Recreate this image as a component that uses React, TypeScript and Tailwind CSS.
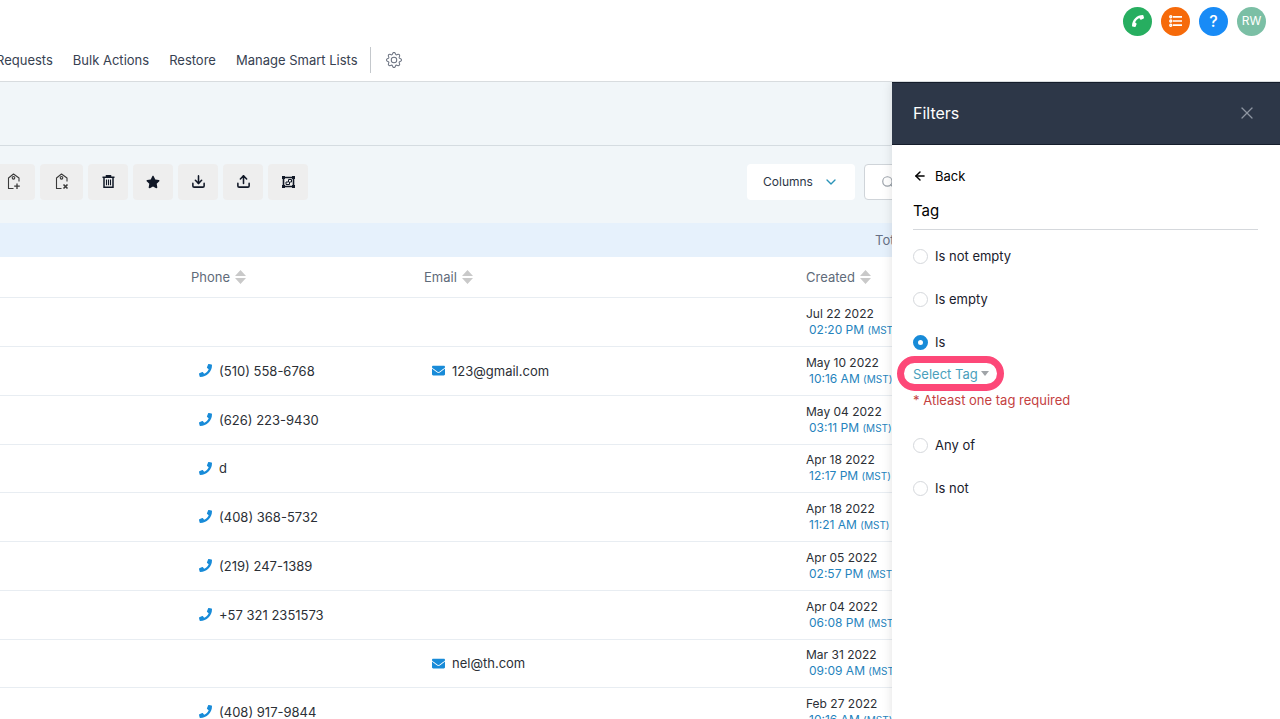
import type { ReactNode } from 'react';
import { ArrowLeft, ChevronDown, Download, Search, Upload, X } from 'lucide-react';
import { BsGear } from 'react-icons/bs';
import { FaEnvelope, FaPhone, FaPhoneAlt, FaStar } from 'react-icons/fa';

interface Contact {
  phone?: string;
  email?: string;
  date: string;
  time: string;
}

const contacts: Contact[] = [
  { date: 'Jul 22 2022', time: '02:20 PM' },
  { phone: '(510) 558-6768', email: '123@gmail.com', date: 'May 10 2022', time: '10:16 AM' },
  { phone: '(626) 223-9430', date: 'May 04 2022', time: '03:11 PM' },
  { phone: 'd', date: 'Apr 18 2022', time: '12:17 PM' },
  { phone: '(408) 368-5732', date: 'Apr 18 2022', time: '11:21 AM' },
  { phone: '(219) 247-1389', date: 'Apr 05 2022', time: '02:57 PM' },
  { phone: '+57 321 2351573', date: 'Apr 04 2022', time: '06:08 PM' },
  { email: 'nel@th.com', date: 'Mar 31 2022', time: '09:09 AM' },
  { phone: '(408) 917-9844', date: 'Feb 27 2022', time: '10:16 AM' },
];

const navItems = ['Requests', 'Bulk Actions', 'Restore', 'Manage Smart Lists'];

function TagIcon({ remove = false }: { remove?: boolean }) {
  return (
    <svg width="14" height="17" viewBox="0 0 14 17" fill="none" stroke="#3a3a3a" strokeWidth="1.1">
      <path d="M6.5 15.5H1.5V5L6.5 1l5.500 4v3.500" strokeLinejoin="round" />
      <circle cx="6.500" cy="4.800" r="1.300" />
      {remove ? (
        <path d="M8.500 11.500l4 4M12.500 11.500l-4 4" strokeWidth="1.600" />
      ) : (
        <path d="M10 10.500v5.500M7.200 13.200h5.600" strokeWidth="1.300" />
      )}
    </svg>
  );
}

function TrashIcon() {
  return (
    <svg width="13" height="13" viewBox="0 0 13 13" fill="none" stroke="#111827">
      <path d="M0.500 2.200h12M4.500 2V0.800h4V2" strokeWidth="1.500" />
      <path d="M2 2.500v9.700h9V2.500" strokeWidth="1.500" />
      <path d="M4.500 4.500v5.700M6.500 4.500v5.700M8.500 4.500v5.700" strokeWidth="1.100" />
    </svg>
  );
}

function MergeIcon() {
  return (
    <svg width="13" height="12" viewBox="0 0 13 12" fill="none" stroke="#111827">
      <path d="M1.500 1.500h10v9h-10z" strokeWidth="1.600" />
      <path d="M0 0h3v3H0zM10 0h3v3h-3zM0 9h3v3H0zM10 9h3v3h-3z" fill="#111827" stroke="none" />
      <path d="M4 8.500V6h2.500V3.500H9.500V6H7.500V8.500z" strokeWidth="1" />
    </svg>
  );
}

function ListIcon() {
  return (
    <svg width="14" height="12" viewBox="0 0 14 12" fill="none" stroke="white" strokeWidth="1.4">
      <circle cx="1.800" cy="1.800" r="1" />
      <circle cx="1.800" cy="6" r="1" />
      <circle cx="1.800" cy="10.200" r="1" />
      <path d="M4 1.800h9M4 6h9M4 10.200h9" strokeWidth="1.700" />
    </svg>
  );
}

function SortIcon() {
  return (
    <svg width="11" height="14" viewBox="0 0 11 14" fill="#c9c9c9">
      <path d="M5.500 0L11 6H0zM5.500 14L11 8H0z" />
    </svg>
  );
}

function ToolButton({ label, wide = false, children }: { label: string; wide?: boolean; children: ReactNode }) {
  return (
    <button
      aria-label={label}
      className={`${wide ? 'w-[43px]' : 'w-10'} h-9 shrink-0 flex items-center justify-center rounded bg-[#eeeeee] text-[#111827]`}
    >
      {children}
    </button>
  );
}

function SortHeader({ label }: { label: string }) {
  return (
    <th className="p-0 pt-px text-left font-normal">
      <button className="flex items-center gap-[5px] text-[#5f6b7a]">
        {label}
        <SortIcon />
      </button>
    </th>
  );
}

function RadioOption({ label, checked = false }: { label: string; checked?: boolean }) {
  return (
    <label className="flex items-center gap-[7px] h-5">
      <input
        type="radio"
        name="tag-filter"
        defaultChecked={checked}
        className="appearance-none size-[15px] rounded-full border border-[#d5d8dc] bg-white checked:border-[5px] checked:border-[#188bd8]"
      />
      {label}
    </label>
  );
}

function Header() {
  return (
    <header className="shrink-0 h-[82px] bg-white border-b border-[#d8dcdf]">
      <div className="h-[42px] flex items-center justify-end gap-[9px] pr-[14px]">
        <button aria-label="Call" className="size-[29px] rounded-full bg-[#27ae60] text-white flex items-center justify-center">
          <FaPhoneAlt className="size-3 rotate-90" />
        </button>
        <button aria-label="Tasks" className="size-[29px] rounded-full bg-[#f66a0a] flex items-center justify-center">
          <ListIcon />
        </button>
        <button className="size-[29px] rounded-full bg-[#188bf6] text-white text-base font-medium">?</button>
        <button className="size-[29px] rounded-full bg-[#7bbfa5] text-white text-xs">RW</button>
      </div>
      <nav className="h-9 flex items-center gap-5 -ml-1 text-[#374151]">
        {navItems.map((item) => (
          <a key={item} href="#" className="whitespace-nowrap">
            {item}
          </a>
        ))}
        <div className="flex items-center -ml-2 gap-[15px]">
          <div className="w-px h-[26px] bg-[#c4c8cc]" />
          <button aria-label="Settings">
            <BsGear className="size-4 text-[#6b7280]" />
          </button>
        </div>
      </nav>
    </header>
  );
}

function Toolbar() {
  return (
    <div className="shrink-0 h-[77px] flex items-center justify-between pr-4 pb-[6px]">
      <div className="flex gap-[5px] -ml-2">
        <ToolButton label="Add tag" wide><TagIcon /></ToolButton>
        <ToolButton label="Remove tag" wide><TagIcon remove /></ToolButton>
        <ToolButton label="Delete"><TrashIcon /></ToolButton>
        <ToolButton label="Favorite"><FaStar className="size-[14px]" /></ToolButton>
        <ToolButton label="Import"><Download className="size-[15px]" strokeWidth={2.5} /></ToolButton>
        <ToolButton label="Export"><Upload className="size-[15px]" strokeWidth={2.5} /></ToolButton>
        <ToolButton label="Merge"><MergeIcon /></ToolButton>
      </div>
      <div className="flex gap-[9px]">
        <button className="h-9 w-[108px] flex items-center justify-center gap-[10px] rounded bg-white text-xs text-[#2d3748]">
          Columns
          <ChevronDown className="size-4 text-[#2a93b8]" />
        </button>
        <label className="h-9 w-[400px] flex items-center gap-2 pl-4 rounded border border-[#cfd4d9] bg-white">
          <Search className="size-[14px] text-[#9aa1a9]" />
          <input type="text" aria-label="Search" className="flex-1 outline-none" />
        </label>
      </div>
    </div>
  );
}

function ContactTable() {
  return (
    <table className="w-full table-fixed border-collapse bg-white">
      <colgroup>
        <col className="w-[191px]" />
        <col className="w-[233px]" />
        <col />
        <col className="w-[474px]" />
      </colgroup>
      <thead>
        <tr className="h-10 border-b border-[#e8edf2]">
          <td />
          <SortHeader label="Phone" />
          <SortHeader label="Email" />
          <SortHeader label="Created" />
        </tr>
      </thead>
      <tbody>
        {contacts.map((contact, i) => (
          <tr key={i} className="h-[49px] nth-[4n]:h-12 border-b border-[#e8edf2] text-[#2b2f36]">
            <td />
            <td className="p-0 pl-2">
              {contact.phone && (
                <div className="flex items-center gap-[7px]">
                  <FaPhone className="size-[13px] text-[#188bd8]" />
                  {contact.phone}
                </div>
              )}
            </td>
            <td className="p-0 pl-2">
              {contact.email && (
                <div className="flex items-center gap-[7px]">
                  <FaEnvelope className="size-[13px] text-[#188bd8]" />
                  {contact.email}
                </div>
              )}
            </td>
            <td className="p-0 text-xs leading-4">
              <div>{contact.date}</div>
              <div className="pl-[3px] text-[#2583bd]">
                {contact.time} <span className="text-[10px]">(MST)</span>
              </div>
            </td>
          </tr>
        ))}
      </tbody>
    </table>
  );
}

function FiltersDrawer() {
  return (
    <aside className="absolute right-0 inset-y-0 w-[388px] bg-white text-[#1a202c] shadow-[0_0_10px_rgba(0,0,0,0.12)]">
      <div className="h-[63px] flex items-center justify-between pl-[21px] pr-[23px] pb-px bg-[#2d3748] border-y border-[#151d2b]">
        <h2 className="text-base text-white">Filters</h2>
        <button aria-label="Close">
          <X className="size-5 text-[#8d95a1]" strokeWidth={1.500} />
        </button>
      </div>
      <div className="pl-[21px] pr-[22px] pt-[21px]">
        <button className="h-5 flex items-center gap-2 text-black">
          <ArrowLeft className="size-[14px]" strokeWidth={2.5} />
          Back
        </button>
        <h3 className="h-11 pt-[13px] text-[15px] leading-6 text-black border-b border-[#d5d8dc]">Tag</h3>
        <div className="pt-4 flex flex-col gap-[23px]">
          <RadioOption label="Is not empty" />
          <RadioOption label="Is empty" />
          <div className="pb-[2px]">
            <RadioOption label="Is" checked />
            {/* ring sits outside the text column so the label stays aligned */}
            <div className="-ml-4 mt-1 -mb-px w-[107px] h-[35px] flex items-center pl-[9px] rounded-full border-[7px] border-[#fd4878]">
              <select
                aria-label="Select Tag"
                className="appearance-none field-sizing-content bg-transparent text-[#4a9fbc] outline-none"
              >
                <option>Select Tag</option>
              </select>
              <svg className="ml-[3px] shrink-0" width="8" height="5" viewBox="0 0 8 5" fill="#a0a4a8">
                <path d="M0 0h8L4 5z" />
              </svg>
            </div>
            <p className="text-[#c4413f]">* Atleast one tag required</p>
          </div>
          <RadioOption label="Any of" />
          <RadioOption label="Is not" />
        </div>
      </div>
    </aside>
  );
}

export default function App() {
  return (
    <div className="h-screen flex flex-col overflow-hidden bg-white text-[13px] leading-5 font-['Inter',sans-serif]">
      <Header />
      <main className="relative flex-1 min-h-0 flex flex-col overflow-hidden bg-[#f1f6f9]">
        <div className="shrink-0 h-16 border-b border-[#d5dce1]" />
        <Toolbar />
        <div className="shrink-0 h-[34px] flex items-center pr-4 bg-[#e6f1fc] justify-end text-[#667085]">
          <p className="w-[389px]">Total</p>
        </div>
        <ContactTable />
        <FiltersDrawer />
      </main>
    </div>
  );
}
